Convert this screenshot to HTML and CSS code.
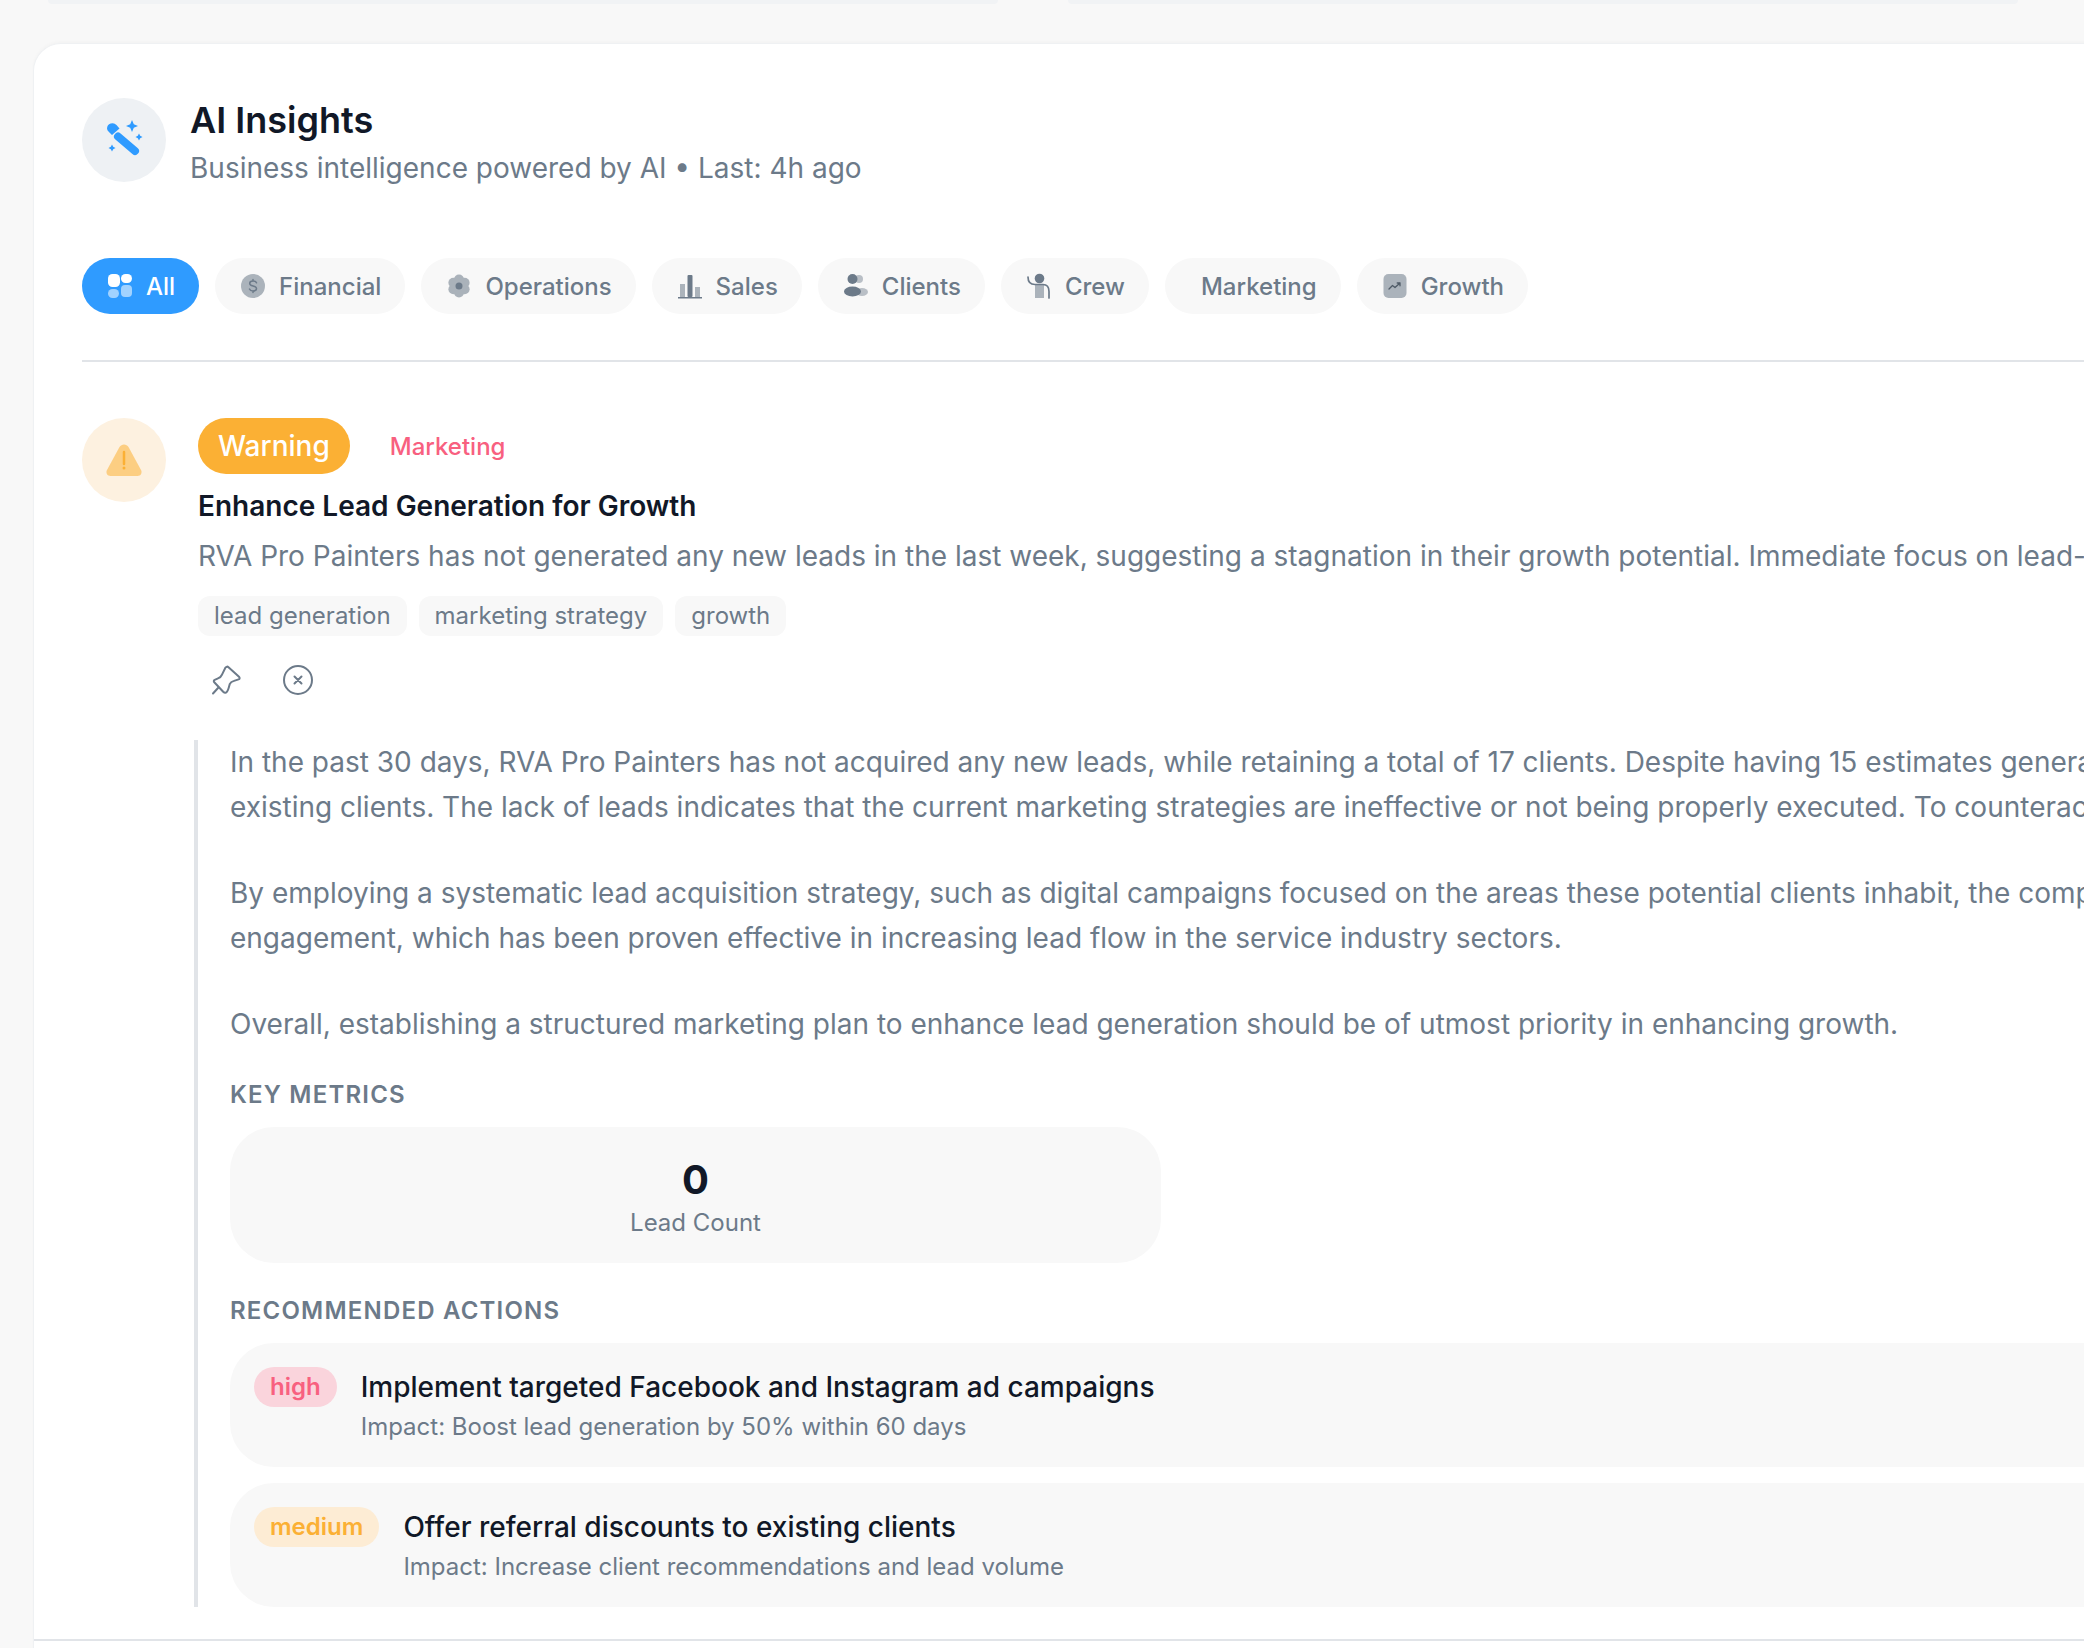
FILE: index.html
```html
<!DOCTYPE html>
<html lang="en">

<head>
  <meta charset="UTF-8">
  <meta name="viewport" content="width=device-width, initial-scale=1.0">
  <title>AI Insights</title>
  <link rel="stylesheet" href="styles.css">
</head>

<body>
  <!-- Stat cards cut off by the top of the window -->
  <div class="top-cards">
    <div class="top-card"></div>
    <div class="top-card"></div>
  </div>

  <div class="panel">
    <!-- Header -->
    <div class="panel-header">
      <div class="circle circle-blue">
        <svg width="40" height="40" viewBox="0 0 40 40" fill="#2f9bff">
          <path d="M14 16.500L31 31" stroke="#2f9bff" stroke-width="8" stroke-linecap="round" />
          <path d="M3 8.500a5.500 5.500 0 0 1 9.500-3.500l3 3.500-7.500 6.500-3.500-3.500a5 5 0 0 1-1.500-3z" />
          <path d="M28 0l1.800 4.200 4.200 1.800-4.200 1.800-1.800 4.200-1.800-4.200-4.200-1.800 4.200-1.800z" />
          <path d="M35 13.500l1.200 2.300 2.300 1.200-2.300 1.200-1.200 2.300-1.200-2.300-2.300-1.200 2.300-1.200z" />
          <path d="M8 24.500l1.200 2.300 2.300 1.200-2.300 1.200-1.200 2.300-1.200-2.300-2.300-1.200 2.300-1.200z" />
        </svg>
      </div>
      <div>
        <h2 class="panel-title">AI Insights</h2>
        <p class="panel-sub">Business intelligence powered by AI • Last: 4h ago</p>
      </div>
    </div>

    <!-- Category filters -->
    <div class="filters">
      <a href="#" class="pill pill-active">
        <svg class="pill-icon" viewBox="0 0 28 28" fill="#fff">
          <rect x="2" y="2" width="12" height="13" rx="4.500" />
          <rect x="15" y="2" width="11" height="9" rx="4.500" />
          <rect x="2" y="17" width="11" height="9" rx="4.500" opacity="0.55" />
          <rect x="15" y="13" width="11" height="12" rx="4" opacity="0.55" />
        </svg>
        All
      </a>
      <a href="#" class="pill">
        <svg class="pill-icon" viewBox="0 0 28 28">
          <circle cx="14" cy="14" r="12" fill="#6c7a89" opacity="0.55" />
          <path d="M17.500 10.800c-.5-1.300-2-1.900-3.500-1.900s-3.300.8-3.300 2.500c0 3.500 6.800 1.700 6.800 5.200 0 1.700-1.700 2.500-3.500 2.500s-3-.7-3.500-2M14 7.500v1.400M14 19.200v1.400" fill="none" stroke="#6c7a89" stroke-width="1.500" stroke-linecap="round" />
        </svg>
        Financial
      </a>
      <a href="#" class="pill">
        <svg class="pill-icon" viewBox="0 0 28 28">
          <g fill="#6c7a89" opacity="0.55">
            <circle cx="14" cy="7.500" r="5" />
            <circle cx="19.600" cy="10.700" r="5" />
            <circle cx="19.600" cy="17.300" r="5" />
            <circle cx="14" cy="20.500" r="5" />
            <circle cx="8.400" cy="17.300" r="5" />
            <circle cx="8.400" cy="10.700" r="5" />
            <circle cx="14" cy="14" r="5" />
          </g>
          <circle cx="14" cy="14" r="3.500" fill="#6c7a89" />
        </svg>
        Operations
      </a>
      <a href="#" class="pill">
        <svg class="pill-icon" viewBox="0 0 28 28" fill="#6c7a89">
          <rect x="4" y="12" width="5" height="13" opacity="0.55" />
          <rect x="11.500" y="3" width="5" height="22" rx="1" />
          <rect x="19" y="15" width="5" height="10" opacity="0.55" />
          <rect x="2" y="25" width="24" height="1.500" />
        </svg>
        Sales
      </a>
      <a href="#" class="pill">
        <svg class="pill-icon" viewBox="0 0 28 28" fill="#6c7a89">
          <circle cx="17" cy="7" r="4" opacity="0.45" />
          <circle cx="10.500" cy="7" r="5" />
          <ellipse cx="20" cy="20" rx="6" ry="4" opacity="0.45" />
          <ellipse cx="10.500" cy="19.500" rx="8.500" ry="5" />
        </svg>
        Clients
      </a>
      <a href="#" class="pill">
        <svg class="pill-icon" viewBox="0 0 28 28">
          <rect x="10" y="13" width="9" height="13" fill="#6c7a89" opacity="0.55" />
          <circle cx="14.500" cy="6.500" r="4.800" fill="#6c7a89" />
          <path d="M3 5c0 4 2 7.500 7 7.500h8c4 0 6 3 6 7V26" fill="none" stroke="#6c7a89" stroke-width="1.700" stroke-linecap="round" />
        </svg>
        Crew
      </a>
      <!-- this category has no icon, the empty slot still takes the gap -->
      <a href="#" class="pill"><span></span>Marketing</a>
      <a href="#" class="pill">
        <svg class="pill-icon" viewBox="0 0 28 28">
          <rect x="2.500" y="2" width="23" height="24" rx="5" fill="#6c7a89" opacity="0.55" />
          <path d="M8 17l3.500-3.500 2.500 2 5-4.500m-2.800 0h2.800v2.800" fill="none" stroke="#4f5b67" stroke-width="1.300" stroke-linecap="round" stroke-linejoin="round" />
        </svg>
        Growth
      </a>
    </div>

    <!-- Insight -->
    <div class="insight">
      <div class="circle circle-amber">
        <svg width="40" height="36" viewBox="0 0 40 36">
          <path d="M15.500 5c2-3.500 7-3.500 9 0l12.500 23c1.500 3-.4 6-3.500 6h-27c-3.100 0-5-3-3.500-6z" fill="#fbb034" opacity="0.55" />
          <path d="M20 10v12" stroke="#fbb034" stroke-width="2.500" stroke-linecap="round" />
          <circle cx="20" cy="26" r="1.500" fill="#fbb034" />
        </svg>
      </div>
      <div class="insight-body">
        <div class="insight-labels">
          <span class="badge-warning">Warning</span>
          <span class="category">Marketing</span>
        </div>
        <h3 class="insight-title">Enhance Lead Generation for Growth</h3>
        <p class="insight-desc">RVA Pro Painters has not generated any new leads in the last week, suggesting a stagnation in their growth potential. Immediate focus on lead-generation is needed.</p>
        <div class="tags">
          <span class="tag">lead generation</span>
          <span class="tag">marketing strategy</span>
          <span class="tag">growth</span>
        </div>
        <div class="insight-actions">
          <button class="icon-btn">
            <svg width="32" height="32" viewBox="0 0 32 32" fill="none" stroke="#6c7a89" stroke-width="2" stroke-linecap="round" stroke-linejoin="round">
              <path d="M3 29.500l5-5.500M15.500 3.500c.8-1 2-1.200 3-.3l10.500 9.500c1 1 .8 2.300-.4 2.700l-4.600 1.500c-2 .6-3.500 1.500-4.300 3.300l-.9 3.300c-.7 2.500-1.500 5-3.300 5.300-.9.2-1.600-.3-2.300-1L4.500 18.500c-1-1-1-2.200.2-2.700l2.800-1.200c2.200-.8 3.800-2 4.500-4z" />
            </svg>
          </button>
          <button class="icon-btn">
            <svg width="32" height="32" viewBox="0 0 32 32" fill="none" stroke="#6c7a89" stroke-width="2" stroke-linecap="round">
              <circle cx="16" cy="16" r="14" />
              <path d="M12.500 12.500l7 7M19.500 12.500l-7 7" />
            </svg>
          </button>
        </div>

        <div class="details">
          <p class="details-text">In the past 30 days, RVA Pro Painters has not acquired any new leads, while retaining a total of 17 clients. Despite having 15 estimates generated, these came from<br>existing clients. The lack of leads indicates that the current marketing strategies are ineffective or not being properly executed. To counteract this stagnation,</p>
          <p class="details-text">By employing a systematic lead acquisition strategy, such as digital campaigns focused on the areas these potential clients inhabit, the company can improve<br>engagement, which has been proven effective in increasing lead flow in the service industry sectors.</p>
          <p class="details-text">Overall, establishing a structured marketing plan to enhance lead generation should be of utmost priority in enhancing growth.</p>

          <h4 class="section-label">Key Metrics</h4>
          <div class="metric">
            <div class="metric-value">0</div>
            <div class="metric-name">Lead Count</div>
          </div>

          <h4 class="section-label section-label-actions">Recommended Actions</h4>
          <div class="action">
            <span class="priority priority-high">high</span>
            <div>
              <div class="action-title">Implement targeted Facebook and Instagram ad campaigns</div>
              <div class="action-impact">Impact: Boost lead generation by 50% within 60 days</div>
            </div>
          </div>
          <div class="action">
            <span class="priority priority-medium">medium</span>
            <div>
              <div class="action-title">Offer referral discounts to existing clients</div>
              <div class="action-impact">Impact: Increase client recommendations and lead volume</div>
            </div>
          </div>
        </div>
      </div>
    </div>
  </div>
</body>

</html>
```

FILE: styles.css
```css
/* page */
body {
  margin: 0;
  height: 1648px;
  overflow: hidden;
  background-color: #f8f8f8;
  font-family: Inter, "Liberation Sans", sans-serif;
  color: #6c7a89;
}

p,
h2,
h3,
h4 {
  margin: 0;
}

.top-cards {
  display: flex;
  gap: 70px;
  height: 4px;
  padding-left: 48px;
  margin-bottom: 39px;
}

.top-card {
  width: 950px;
  background-color: #f1f3f5;
  border-bottom-left-radius: 20px;
  border-bottom-right-radius: 20px;
}

.panel {
  width: 2400px;
  height: 1700px;
  box-sizing: border-box;
  margin-left: 33px;
  padding: 54px 48px 0 48px;
  background-color: #fff;
  border-top: 1px solid #eff1f3;
  border-left: 1px solid #eff1f3;
  border-top-left-radius: 28px;
  box-shadow: 0 -2px 3px rgba(0, 0, 0, 0.02);
}

.circle {
  flex: none;
  width: 84px;
  height: 84px;
  border-radius: 50%;
  display: flex;
  align-items: center;
  justify-content: center;
}

.circle-blue {
  background-color: #eef1f4;
}

.circle-amber {
  background-color: #fdf1e0;
}

/* header */
.panel-header {
  display: flex;
  align-items: flex-start;
  gap: 24px;
  margin-bottom: 70px;
}

.panel-title {
  font-size: 36px;
  font-weight: 600;
  line-height: 44px;
  color: #111827;
}

.panel-sub {
  font-size: 28px;
  line-height: 40px;
  margin-top: 6px;
}

/* filters */
.filters {
  display: flex;
  gap: 16px;
  padding-bottom: 46px;
  border-bottom: 2px solid #e1e4e8;
  margin-bottom: 56px;
}

.pill {
  display: flex;
  align-items: center;
  gap: 12px;
  height: 56px;
  padding: 0 24px;
  border-radius: 28px;
  background-color: #f8f8f8;
  color: #6c7a89;
  font-size: 24px;
  font-weight: 500;
  text-decoration: none;
}

.pill-active {
  background-color: #2f9bff;
  color: #fff;
}

.pill-icon {
  width: 28px;
  height: 28px;
}

/* insight */
.insight {
  display: flex;
  gap: 32px;
  margin-left: -48px;
  padding-left: 48px;
  padding-bottom: 32px;
  border-bottom: 2px solid #e1e4e8;
}

.insight-labels {
  display: flex;
  align-items: center;
  gap: 40px;
}

.badge-warning {
  height: 56px;
  line-height: 56px;
  padding: 0 20px;
  border-radius: 28px;
  background-color: #fbb034;
  color: #fff;
  font-size: 28px;
  font-weight: 500;
}

.category {
  font-size: 24px;
  font-weight: 500;
  color: #f8607f;
}

.insight-title {
  font-size: 28px;
  font-weight: 600;
  line-height: 40px;
  margin-top: 12px;
  color: #111827;
}

.insight-desc {
  font-size: 28px;
  line-height: 44px;
  margin-top: 8px;
  white-space: nowrap;
}

.tags {
  display: flex;
  gap: 12px;
  margin-top: 18px;
}

.tag {
  height: 40px;
  line-height: 40px;
  padding: 0 16px;
  border-radius: 12px;
  background-color: #f8f8f8;
  font-size: 24px;
}

.insight-actions {
  display: flex;
  gap: 40px;
  margin-top: 28px;
  padding-left: 12px;
}

.icon-btn {
  padding: 0;
  border: none;
  background: none;
  display: flex;
}

/* expanded details */
.details {
  margin-top: 44px;
  margin-left: -4px;
  padding-left: 32px;
  border-left: 4px solid #e1e4e8;
}

.details-text {
  font-size: 28px;
  line-height: 45px;
  white-space: nowrap;
  margin-bottom: 41px;
}

.section-label {
  font-size: 24px;
  font-weight: 600;
  line-height: 32px;
  letter-spacing: 1.2px;
  text-transform: uppercase;
  margin-top: -9px;
  margin-bottom: 16px;
}

.section-label-actions {
  margin-top: 32px;
}

.metric {
  width: 931px;
  height: 136px;
  box-sizing: border-box;
  padding-top: 5px;
  border-radius: 44px;
  background-color: #f8f8f8;
  display: flex;
  flex-direction: column;
  align-items: center;
  justify-content: center;
}

.metric-value {
  font-size: 40px;
  font-weight: 700;
  line-height: 50px;
  color: #111827;
}

.metric-name {
  font-size: 24px;
  line-height: 36px;
}

.action {
  display: flex;
  align-items: flex-start;
  gap: 24px;
  height: 124px;
  box-sizing: border-box;
  padding: 24px;
  margin-bottom: 16px;
  border-radius: 44px;
  background-color: #f8f8f8;
}

.action:last-child {
  margin-bottom: 0;
}

.priority {
  height: 40px;
  line-height: 40px;
  padding: 0 16px;
  border-radius: 20px;
  font-size: 24px;
  font-weight: 600;
}

.priority-high {
  background-color: #fad4dc;
  color: #f8607f;
}

.priority-medium {
  background-color: #fdecd4;
  color: #fbb034;
}

.action-title {
  font-size: 28px;
  font-weight: 500;
  line-height: 40px;
  color: #111827;
}

.action-impact {
  font-size: 24px;
  line-height: 36px;
  margin-top: 2px;
}
```
